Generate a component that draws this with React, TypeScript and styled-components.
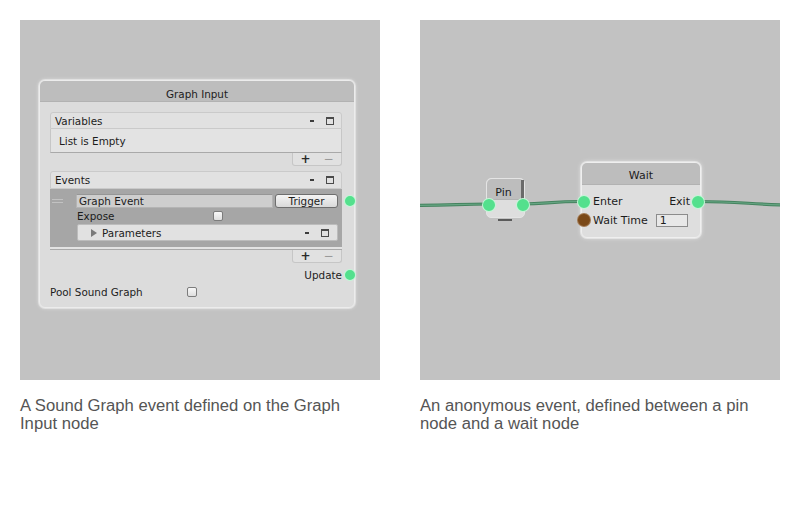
import React from "react";
import styled, { createGlobalStyle } from "styled-components";

const GlobalStyle = createGlobalStyle`
  html, body { margin: 0; padding: 0; background: #ffffff; }
  body { font-family: "Liberation Sans", Arial, sans-serif; }
`;

const nodeFont = `"DejaVu Sans", Verdana, sans-serif`;

const Page = styled.div`
  display: flex;
  gap: 40px;
  padding: 20px;
`;

const Figure = styled.figure`
  margin: 0;
  width: 360px;
  display: flex;
  flex-direction: column;
`;

const Canvas = styled.div`
  position: relative;
  width: 360px;
  height: 360px;
  background: #c2c2c2;
  overflow: hidden;
`;

const Caption = styled.figcaption`
  margin-top: 17px;
  font-family: "Liberation Sans", Arial, sans-serif;
  font-size: 16.65px;
  line-height: 17.6px;
  color: #555555;
`;

/* ---------- shared node parts ---------- */

const Port = styled.span<{ $size: number; $color?: string }>`
  position: absolute;
  width: ${(p) => p.$size}px;
  height: ${(p) => p.$size}px;
  box-sizing: border-box;
  border-radius: 50%;
  background: ${(p) => p.$color ?? "#54e08d"};
  border: 1px solid ${(p) => (p.$color ? "rgba(200,170,140,0.5)" : "rgba(215,250,228,0.85)")};
`;

const Checkbox = styled.span`
  display: inline-block;
  width: 10px;
  height: 10px;
  box-sizing: border-box;
  border: 1px solid #7c7c7c;
  border-radius: 2px;
  background: linear-gradient(#f8f8f8, #dedede);
`;

const MinusIcon = styled.span`
  display: inline-block;
  width: 4px;
  height: 2px;
  background: #3c3c3c;
`;

const WindowIcon = styled.span`
  display: inline-block;
  width: 8px;
  height: 8px;
  box-sizing: border-box;
  border: 1px solid #4a4a4a;
  border-top-width: 2px;
`;

const HeaderIcons = styled.span`
  display: flex;
  align-items: center;
  gap: 12px;
`;

/* ---------- Graph Input node ---------- */

const GraphNode = styled.div`
  position: absolute;
  left: 19px;
  top: 60px;
  width: 316px;
  box-sizing: border-box;
  border: 1px solid #ececec;
  border-radius: 6px;
  background: #dcdcdc;
  box-shadow: 0 0 0 1px rgba(255, 255, 255, 0.35), 0 0 4px rgba(255, 255, 255, 0.55);
  font-family: ${nodeFont};
  font-size: 10.4px;
  color: #1c1c1c;
  padding-bottom: 8px;
`;

const NodeHeader = styled.div<{ $h: number; $pb: number; $pr?: number }>`
  position: relative;
  height: ${(p) => p.$h}px;
  box-sizing: border-box;
  background: #bdbdbd;
  border-radius: 5px 5px 0 0;
  border-bottom: 1px solid #b2b2b2;
  display: flex;
  align-items: flex-end;
  justify-content: center;
  padding-bottom: ${(p) => p.$pb}px;
  padding-right: ${(p) => p.$pr ?? 0}px;
`;

const NodeBody = styled.div`
  display: flex;
  flex-direction: column;
  padding: 10px 12px 0 10px;
`;

const SectionHeader = styled.div<{ $mt: number; $h: number }>`
  margin-top: ${(p) => p.$mt}px;
  height: ${(p) => p.$h}px;
  box-sizing: border-box;
  background: #e1e1e1;
  border: 1px solid #cacaca;
  border-radius: 3px 3px 0 0;
  display: flex;
  align-items: center;
  justify-content: space-between;
  padding: 0 7px 0 4px;
`;

const EmptyList = styled.div`
  height: 24px;
  box-sizing: border-box;
  background: #e3e3e3;
  border: 1px solid #c6c6c6;
  border-top: none;
  border-bottom-color: #a9a9a9;
  display: flex;
  align-items: center;
  padding-left: 8px;
`;

const FilledList = styled.div`
  background: #e3e3e3;
  border-bottom: 1px solid #a9a9a9;
  padding-bottom: 2px;
`;

const ListFooter = styled.div`
  align-self: flex-end;
  width: 50px;
  height: 13px;
  box-sizing: border-box;
  background: #e1e1e1;
  border: 1px solid #c6c6c6;
  border-top: none;
  border-radius: 0 0 3px 3px;
  display: flex;
  padding-left: 1px;
`;

const FooterButton = styled.span<{ $disabled?: boolean }>`
  width: 23px;
  display: flex;
  align-items: center;
  justify-content: center;
  font-size: 12px;
  font-weight: ${(p) => (p.$disabled ? "normal" : "bold")};
  line-height: 11px;
  color: ${(p) => (p.$disabled ? "#9a9a9a" : "#2a2a2a")};
`;

const SelectedElement = styled.div`
  position: relative;
  height: 58px;
  box-sizing: border-box;
  background: #a6a6a6;
  padding: 5px 4px 0 2px;
  display: flex;
  flex-direction: column;
`;

const ElementRow = styled.div`
  display: flex;
  align-items: center;
  height: 14px;
`;

const DragHandle = styled.span`
  width: 11px;
  height: 4px;
  margin-right: 13px;
  box-sizing: border-box;
  border-top: 1px solid #c2c2c2;
  border-bottom: 1px solid #c2c2c2;
`;

const TextField = styled.span`
  flex: 1;
  height: 14px;
  box-sizing: border-box;
  background: #cecece;
  border: 1px solid #b4b4b4;
  border-top-color: #969696;
  margin-right: 2px;
  padding-left: 2px;
  display: flex;
  align-items: center;
`;

const Button = styled.span`
  width: 63px;
  height: 14px;
  box-sizing: border-box;
  border: 1px solid #6e6e6e;
  border-radius: 3px;
  background: linear-gradient(#f4f4f4, #d9d9d9);
  display: flex;
  align-items: center;
  justify-content: center;
`;

const PropertyRow = styled.div<{ $labelW: number; $pl?: number; $h: number; $mt?: number }>`
  display: flex;
  align-items: center;
  height: ${(p) => p.$h}px;
  margin-top: ${(p) => p.$mt ?? 0}px;
  padding-left: ${(p) => p.$pl ?? 0}px;
  & > label {
    width: ${(p) => p.$labelW}px;
    flex: none;
  }
`;

const Foldout = styled.div`
  margin-left: 25px;
  height: 17px;
  box-sizing: border-box;
  background: #e1e1e1;
  border: 1px solid #bcbcbc;
  border-radius: 2px;
  display: flex;
  align-items: center;
  justify-content: space-between;
  padding: 0 8px 0 13px;
`;

const FoldoutLabel = styled.span`
  display: flex;
  align-items: center;
  gap: 5px;
`;

const Arrow = styled.span`
  width: 0;
  height: 0;
  border-top: 4px solid transparent;
  border-bottom: 4px solid transparent;
  border-left: 6px solid #7a7a7a;
`;

const OutputRow = styled.div`
  position: relative;
  height: 14px;
  margin-top: 5px;
  line-height: 14px;
  text-align: right;
`;

/* ---------- right side nodes ---------- */

const WaitNode = styled.div`
  position: absolute;
  left: 161px;
  top: 142px;
  width: 120px;
  box-sizing: border-box;
  border: 1px solid #efefef;
  border-radius: 6px;
  background: #dedede;
  box-shadow: 0 0 0 1px rgba(255, 255, 255, 0.4), 0 0 5px rgba(255, 255, 255, 0.6);
  font-family: ${nodeFont};
  font-size: 11px;
  color: #1c1c1c;
  padding-bottom: 9px;
`;

const WaitBody = styled.div`
  display: flex;
  flex-direction: column;
  padding: 9px 10px 0 11px;
`;

const PortRow = styled.div<{ $h: number; $mt?: number }>`
  position: relative;
  height: ${(p) => p.$h}px;
  margin-top: ${(p) => p.$mt ?? 0}px;
  display: flex;
  align-items: center;
  justify-content: space-between;
`;

const ValueField = styled.span`
  width: 32px;
  height: 13px;
  box-sizing: border-box;
  margin-left: 8px;
  background: #e8e8e8;
  border: 1px solid #8c8c8c;
  padding-left: 3px;
  line-height: 11px;
  margin-right: auto;
`;

const PinNode = styled.div`
  position: absolute;
  left: 66px;
  top: 158px;
  width: 39px;
  height: 40px;
  box-sizing: border-box;
  border: 1px solid #e4e4e4;
  border-radius: 5px;
  background: #dedede;
  font-family: ${nodeFont};
  font-size: 11px;
  color: #1c1c1c;
  &::after {
    content: "";
    position: absolute;
    left: 11px;
    bottom: -4px;
    width: 14px;
    height: 2px;
    background: #5a5a5a;
  }
`;

const PinShade = styled.span`
  position: absolute;
  right: 0;
  top: 1px;
  width: 3px;
  height: 19px;
  background: #6a6a6a;
`;

const WireLayer = styled.svg`
  position: absolute;
  inset: 0;
`;

function Wire({ d }: { d: string }) {
  return (
    <g fill="none" strokeLinecap="round">
      <path d={d} stroke="#45835f" strokeWidth={3.2} />
      <path d={d} stroke="#66a583" strokeWidth={1.2} />
    </g>
  );
}

export default function App() {
  return (
    <>
      <GlobalStyle />
      <Page>
        <Figure>
          <Canvas>
            <GraphNode>
              <NodeHeader $h={21} $pb={1}>Graph Input</NodeHeader>
              <NodeBody>
                <SectionHeader $mt={0} $h={17}>
                  <span>Variables</span>
                  <HeaderIcons>
                    <MinusIcon />
                    <WindowIcon />
                  </HeaderIcons>
                </SectionHeader>
                <EmptyList>List is Empty</EmptyList>
                <ListFooter>
                  <FooterButton>+</FooterButton>
                  <FooterButton $disabled>−</FooterButton>
                </ListFooter>

                <SectionHeader $mt={5} $h={18}>
                  <span>Events</span>
                  <HeaderIcons>
                    <MinusIcon />
                    <WindowIcon />
                  </HeaderIcons>
                </SectionHeader>
                <FilledList>
                  <SelectedElement>
                    <ElementRow>
                      <DragHandle />
                      <TextField>Graph Event</TextField>
                      <Button>Trigger</Button>
                    </ElementRow>
                    <PropertyRow $labelW={136} $pl={25} $h={16}>
                      <label>Expose</label>
                      <Checkbox />
                    </PropertyRow>
                    <Foldout>
                      <FoldoutLabel>
                        <Arrow />
                        Parameters
                      </FoldoutLabel>
                      <HeaderIcons>
                        <MinusIcon />
                        <WindowIcon />
                      </HeaderIcons>
                    </Foldout>
                    <Port $size={12} style={{ right: -14, top: 6 }} />
                  </SelectedElement>
                </FilledList>
                <ListFooter>
                  <FooterButton>+</FooterButton>
                  <FooterButton $disabled>−</FooterButton>
                </ListFooter>

                <OutputRow>
                  Update
                  <Port $size={12} style={{ right: -14, top: 1 }} />
                </OutputRow>
                <PropertyRow $labelW={137} $h={14} $mt={3}>
                  <label>Pool Sound Graph</label>
                  <Checkbox />
                </PropertyRow>
              </NodeBody>
            </GraphNode>
          </Canvas>
          <Caption>A Sound Graph event defined on the Graph Input node</Caption>
        </Figure>

        <Figure>
          <Canvas>
            <WireLayer width={360} height={360} viewBox="0 0 360 360">
              <Wire d="M -10 185.5 C 30 185.5, 40 184, 68 184" />
              <Wire d="M 102 184 C 128 184, 128 181.5, 164 181.5" />
              <Wire d="M 278 181.5 C 320 181.5, 330 184.5, 380 185.5" />
            </WireLayer>
            <PinNode>
              <NodeHeader $h={21} $pb={0} $pr={4}>
                Pin
                <PinShade />
              </NodeHeader>
              <Port $size={14} style={{ left: -5, top: 19 }} />
              <Port $size={14} style={{ left: 29, top: 19 }} />
            </PinNode>
            <WaitNode>
              <NodeHeader $h={22} $pb={2}>Wait</NodeHeader>
              <WaitBody>
                <PortRow $h={15}>
                  <Port $size={14} style={{ left: -16, top: 0.5 }} />
                  <span>Enter</span>
                  <span>Exit</span>
                  <Port $size={14} style={{ right: -15, top: 0.5 }} />
                </PortRow>
                <PortRow $h={16} $mt={3}>
                  <Port $size={14} $color="#7b4918" style={{ left: -16, top: 1 }} />
                  <span>Wait Time</span>
                  <ValueField>1</ValueField>
                </PortRow>
              </WaitBody>
            </WaitNode>
          </Canvas>
          <Caption>An anonymous event, defined between a pin node and a wait node</Caption>
        </Figure>
      </Page>
    </>
  );
}
